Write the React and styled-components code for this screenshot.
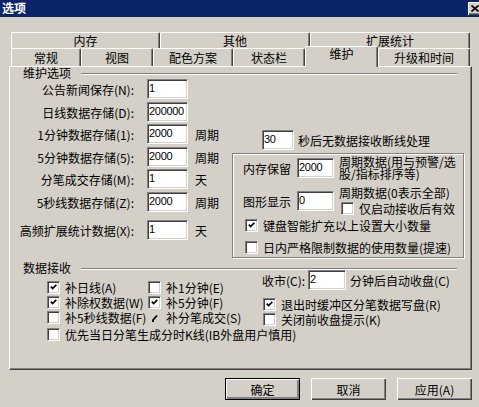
import React from 'react'
import styled, { createGlobalStyle } from 'styled-components'

const tabsBack = [
  { label: '内存', w: 149 },
  { label: '其他', w: 150 },
  { label: '扩展统计', w: 160 },
]

const tabsFront = [
  { label: '常规', w: 70 },
  { label: '视图', w: 72 },
  { label: '配色方案', w: 80 },
  { label: '状态栏', w: 72 },
  { label: '维护', w: 73, active: true },
  { label: '升级和时间', w: 92 },
]

const storageRows = [
  { label: '公告新闻保存(N):', value: '1', mt: 0 },
  { label: '日线数据存储(D):', value: '200000', mt: 3 },
  { label: '1分钟数据存储(1):', value: '2000', unit: '周期', mt: 2 },
  { label: '5分钟数据存储(5):', value: '2000', unit: '周期', mt: 3 },
  { label: '分笔成交存储(M):', value: '1', unit: '天', mt: 2 },
  { label: '5秒线数据存储(Z):', value: '2000', unit: '周期', mt: 3 },
  { label: '高频扩展统计数据(X):', value: '1', unit: '天', mt: 8 },
]

const fillChecks = [
  { label: '补日线(A)', checked: true },
  { label: '补1分钟(E)' },
  { label: '补除权数据(W)', checked: true },
  { label: '补5分钟(F)', checked: true },
  { label: '补5秒线数据(F)' },
  { label: '补分笔成交(S)', clipped: true },
]

const CheckMark = () => (
  <svg width="7" height="7" viewBox="0 0 7 7">
    <path d="M0.8 2.6 L2.6 4.6 L6.3 0.9" fill="none" stroke="#000" strokeWidth="1.7" />
  </svg>
)

const Check = ({ label, checked, clipped }) => (
  <CheckRow>
    {clipped ? (
      <ClippedMark>
        <svg width="6" height="9" viewBox="0 0 6 9">
          <path d="M1 8 L1 6 L5 1.5" fill="none" stroke="#000" strokeWidth="1.8" />
        </svg>
      </ClippedMark>
    ) : (
      <CheckBox>{checked && <CheckMark />}</CheckBox>
    )}
    <CheckText>{label}</CheckText>
  </CheckRow>
)

export default function App() {
  return (
    <Window>
      <GlobalStyle />
      <TitleBar>
        <Title>选项</Title>
        <CloseButton>
          <svg width="8" height="7" viewBox="0 0 8 7">
            <path d="M0.5 0.5 L7.5 6.5 M7.5 0.5 L0.5 6.5" stroke="#000" strokeWidth="1.6" />
          </svg>
        </CloseButton>
      </TitleBar>

      <Body>
        <TabStrip>
          <TabRow>
            {tabsBack.map(t => (
              <Tab key={t.label} $w={t.w} $h={16}>{t.label}</Tab>
            ))}
          </TabRow>
          <TabRow>
            {tabsFront.map(t => (
              <Tab key={t.label} $w={t.w} $h={18} $active={t.active}>{t.label}</Tab>
            ))}
          </TabRow>
        </TabStrip>

        <Panel>
          <Legend>维护选项</Legend>
          <MainArea>
            <StorageColumn>
              {storageRows.map(r => (
                <FormRow key={r.label} $mt={r.mt}>
                  <FieldLabel>{r.label}</FieldLabel>
                  <Field $w={41} defaultValue={r.value} readOnly />
                  {r.unit && <Unit>{r.unit}</Unit>}
                </FormRow>
              ))}
            </StorageColumn>

            <SideColumn>
              <TimeoutRow>
                <Field $w={32} defaultValue="30" readOnly />
                <span>秒后无数据接收断线处理</span>
              </TimeoutRow>
              <MemoryBox>
                <MemoryRow $mt={2}>
                  <MemoryLabel>内存保留</MemoryLabel>
                  <Field $w={37} defaultValue="2000" readOnly />
                  <MemoryNote>
                    <NoteLine>周期数据(用与预警/选</NoteLine>
                    <NoteLine>股/指标排序等)</NoteLine>
                  </MemoryNote>
                </MemoryRow>
                <MemoryRow $mt={7}>
                  <MemoryLabel>图形显示</MemoryLabel>
                  <Field $w={37} defaultValue="0" readOnly />
                  <MemoryNote>
                    <NoteLine>周期数据(0表示全部)</NoteLine>
                    <SubCheck>
                      <Check label="仅启动接收后有效" />
                    </SubCheck>
                  </MemoryNote>
                </MemoryRow>
                <BoxCheck $mt={4}>
                  <Check label="键盘智能扩充以上设置大小数量" checked />
                </BoxCheck>
                <BoxCheck $mt={9}>
                  <Check label="日内严格限制数据的使用数量(提速)" />
                </BoxCheck>
              </MemoryBox>
            </SideColumn>
          </MainArea>

          <Legend $mt={4}>数据接收</Legend>
          <DataArea>
            <FillGrid>
              {fillChecks.map(c => (
                <Check key={c.label} {...c} />
              ))}
            </FillGrid>
            <CloseColumn>
              <TimeoutRow>
                <span>收市(C):</span>
                <Field $w={38} defaultValue="2" readOnly />
                <span>分钟后自动收盘(C)</span>
              </TimeoutRow>
              <CloseChecks>
                <Check label="退出时缓冲区分笔数据写盘(R)" checked />
                <Check label="关闭前收盘提示(K)" />
              </CloseChecks>
            </CloseColumn>
          </DataArea>
          <LongRow>
            <Check label="优先当日分笔生成分时K线(IB外盘用户慎用)" />
          </LongRow>
        </Panel>

        <ButtonBar>
          <Button $default>确定</Button>
          <Button>取消</Button>
          <Button>应用(A)</Button>
        </ButtonBar>
      </Body>
    </Window>
  )
}

const GlobalStyle = createGlobalStyle`
  html, body {
    margin: 0;
    padding: 0;
    background: #d4d0c8;
  }
  body {
    font-family: "Noto Sans CJK SC", "Liberation Sans", sans-serif;
    font-size: 12px;
    color: #000;
  }
  * {
    box-sizing: border-box;
  }
`

const Window = styled.div`
  width: 479px;
  height: 407px;
  background: #d4d0c8;
  overflow: hidden;
  display: flex;
  flex-direction: column;
`

const TitleBar = styled.div`
  height: 17px;
  background: #0a246a;
  display: flex;
  align-items: flex-start;
  padding-left: 2px;
  overflow: hidden;
`

const Title = styled.div`
  color: #fff;
  font-weight: bold;
  font-size: 12px;
  line-height: 16px;
`

const CloseButton = styled.div`
  margin: 2px -3px 0 auto;
  width: 14px;
  height: 13px;
  background: #d4d0c8;
  box-shadow: inset 1px 1px 0 #fff, inset -1px -1px 0 #404040, inset -2px -2px 0 #808080;
  display: flex;
  align-items: center;
  padding-left: 3px;
`

const Body = styled.div`
  padding: 15px 0 0 9px;
`

const TabStrip = styled.div`
  margin-left: 2px;
  display: flex;
  flex-direction: column;
`

const TabRow = styled.div`
  display: flex;
  align-items: flex-start;
`

const Tab = styled.div`
  position: relative;
  width: ${p => p.$w}px;
  height: ${p => p.$h}px;
  border-top: 1px solid #fff;
  border-left: 1px solid #fff;
  border-right: 1px solid #404040;
  border-radius: 2px 2px 0 0;
  box-shadow: inset -1px 0 0 #808080;
  background: #d4d0c8;
  text-align: center;
  white-space: nowrap;
  line-height: ${p => p.$h - 1}px;
  ${p => p.$active && `
    height: 21px;
    margin: -2px 0 -1px;
    line-height: 13px;
    z-index: 1;
  `}
`

const Panel = styled.div`
  width: 463px;
  height: 304px;
  border-top: 1px solid #fff;
  border-left: 1px solid #fff;
  border-right: 1px solid #404040;
  border-bottom: 1px solid #404040;
  box-shadow: inset -1px -1px 0 #808080;
  display: flex;
  flex-direction: column;
`

const Legend = styled.div`
  display: flex;
  align-items: center;
  height: 12px;
  line-height: 12px;
  padding-left: 13px;
  margin-top: ${p => p.$mt || 0}px;
  &::after {
    content: '';
    flex: 1;
    margin: 1px 14px 0 10px;
    border-top: 1px solid #808080;
    border-bottom: 1px solid #fff;
  }
`

const MainArea = styled.div`
  display: flex;
  align-items: flex-start;
`

const StorageColumn = styled.div`
  width: 222px;
  display: flex;
  flex-direction: column;
`

const FormRow = styled.div`
  display: flex;
  align-items: center;
  height: 20px;
  margin-top: ${p => p.$mt}px;
`

const FieldLabel = styled.span`
  width: 124px;
  text-align: right;
  white-space: nowrap;
  margin-right: 13px;
`

const Field = styled.input`
  width: ${p => p.$w}px;
  height: 20px;
  margin: 0;
  padding: 0 0 2px 1px;
  background: #fff;
  border-top: 1px solid #808080;
  border-left: 1px solid #808080;
  border-right: 1px solid #fff;
  border-bottom: 1px solid #fff;
  box-shadow: inset 1px 1px 0 #404040, inset -1px -1px 0 #d4d0c8;
  font-family: "Liberation Sans", sans-serif;
  font-size: 11px;
  letter-spacing: -0.3px;
  color: #000;
  outline: none;
`

const Unit = styled.span`
  margin-left: 7px;
`

const SideColumn = styled.div`
  flex: 1;
  display: flex;
  flex-direction: column;
  margin-top: 51px;
`

const TimeoutRow = styled.div`
  display: flex;
  align-items: center;
  gap: 4px;
  height: 20px;
  padding-left: 30px;
  white-space: nowrap;
  & > span:first-child {
    margin-right: -1px;
  }
`

const MemoryBox = styled.div`
  width: 232px;
  height: 105px;
  margin-top: 3px;
  border: 1px solid #808080;
  box-shadow: inset 1px 1px 0 #fff, 1px 1px 0 #fff;
  display: flex;
  flex-direction: column;
  padding-left: 10px;
`

const MemoryRow = styled.div`
  display: flex;
  align-items: center;
  margin-top: ${p => p.$mt}px;
`

const MemoryLabel = styled.span`
  width: 48px;
  margin-right: 6px;
  white-space: nowrap;
`

const MemoryNote = styled.div`
  margin-left: 5px;
  display: flex;
  flex-direction: column;
  white-space: nowrap;
`

const NoteLine = styled.div`
  height: 12px;
  line-height: 12px;
`

const SubCheck = styled.div`
  margin: 3px 0 0 2px;
`

const BoxCheck = styled.div`
  margin: ${p => p.$mt}px 0 0 2px;
`

const CheckRow = styled.div`
  display: flex;
  align-items: center;
  gap: 5px;
  height: 13px;
  white-space: nowrap;
`

const CheckText = styled.div`
  height: 13px;
  line-height: 13px;
`

const CheckBox = styled.span`
  flex: none;
  width: 13px;
  height: 13px;
  background: #fff;
  border-top: 1px solid #808080;
  border-left: 1px solid #808080;
  border-right: 1px solid #fff;
  border-bottom: 1px solid #fff;
  box-shadow: inset 1px 1px 0 #404040, inset -1px -1px 0 #d4d0c8;
  display: flex;
  align-items: center;
  justify-content: center;
`

const ClippedMark = styled.span`
  flex: none;
  width: 13px;
  height: 13px;
  display: flex;
  align-items: flex-end;
  padding: 0 0 1px 4px;
`

const DataArea = styled.div`
  display: flex;
  align-items: flex-start;
  margin-top: -4px;
`

const FillGrid = styled.div`
  width: 252px;
  padding: 11px 0 0 37px;
  display: grid;
  grid-template-columns: 101px auto;
  row-gap: 2px;
`

const CloseColumn = styled.div`
  display: flex;
  flex-direction: column;
  margin-left: -30px;
`

const CloseChecks = styled.div`
  display: flex;
  flex-direction: column;
  gap: 2px;
  margin: 8px 0 0 31px;
`

const LongRow = styled.div`
  margin-top: 2px;
  padding-left: 37px;
`

const ButtonBar = styled.div`
  display: flex;
  justify-content: flex-end;
  gap: 11px;
  margin-top: 8px;
  padding-right: 7px;
`

const Button = styled.button`
  width: 75px;
  height: 22px;
  margin: 0;
  padding: 0;
  background: #d4d0c8;
  border: ${p => (p.$default ? '1px solid #000' : 'none')};
  box-shadow: inset 1px 1px 0 #fff, inset -1px -1px 0 ${p => (p.$default ? '#808080' : '#404040')},
    inset -2px -2px 0 #808080;
  font-family: "Noto Sans CJK SC", "Liberation Sans", sans-serif;
  font-size: 12px;
  color: #000;
`
